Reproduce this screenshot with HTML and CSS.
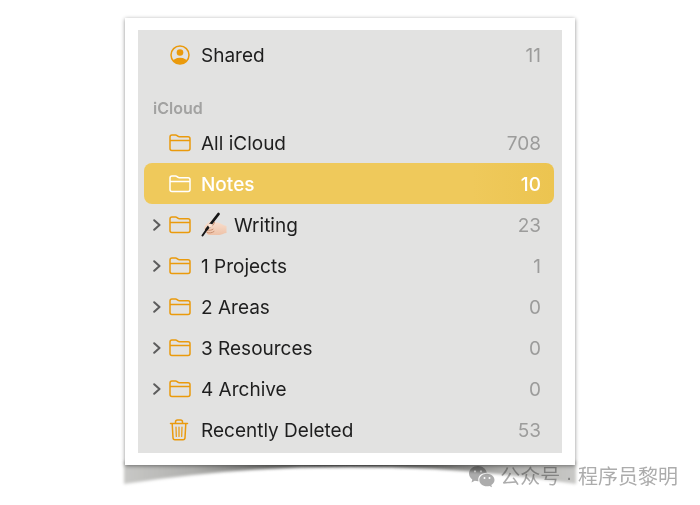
FILE: index.html
```html
<!DOCTYPE html>
<html lang="en">
  <head>
    <meta charset="utf-8">
    <title>Notes folders</title>
    <link rel="stylesheet" href="styles.css">
  </head>
  <body>
    <svg class="symbols" aria-hidden="true">
      <symbol id="folder" viewBox="0 0 22 18">
        <path d="M1 14.500V3a2 2 0 0 1 2-2h3.600c.7 0 1 .2 1.500.6l.7.6c.5.4.8.6 1.500.6H19a2 2 0 0 1 2 2v9.700a2 2 0 0 1-2 2H3a2 2 0 0 1-2-2zM1 6.500h20" />
      </symbol>
      <symbol id="chevron" viewBox="0 0 8 12">
        <path d="M1.200 1.200L6.500 6l-5.300 4.800" />
      </symbol>
    </svg>

    <main class="card">
      <svg class="curl" viewBox="0 0 470 40" preserveAspectRatio="none" aria-hidden="true">
        <defs>
          <linearGradient id="curl-fill">
            <stop offset="0" stop-color="#c8c8c6" />
            <stop offset="0.15" stop-color="#b0b0ae" />
            <stop offset="0.35" stop-color="#6a6a68" />
            <stop offset="0.5" stop-color="#303030" />
            <stop offset="0.65" stop-color="#6a6a68" />
            <stop offset="0.85" stop-color="#b0b0ae" />
            <stop offset="1" stop-color="#c8c8c6" />
          </linearGradient>
          <filter id="soft" x="-5%" y="-30%" width="110%" height="160%">
            <feGaussianBlur stdDeviation="1.600" />
          </filter>
        </defs>
        <path d="M9 4H461V27Q235 -8 9 27z" fill="url(#curl-fill)" filter="url(#soft)" />
      </svg>

      <nav class="sidebar">
        <ul class="list">
          <li>
            <a class="row" href="#shared">
              <span class="arrow"></span>
              <svg class="icon icon-person" viewBox="0 0 20 20" aria-hidden="true">
                <clipPath id="disc"><circle cx="10" cy="10" r="9" /></clipPath>
                <circle cx="10" cy="10" r="9" fill="none" stroke="currentColor" stroke-width="1.500" />
                <circle cx="10" cy="7.500" r="3.300" fill="currentColor" />
                <ellipse cx="10" cy="17.500" rx="7.500" ry="4.700" fill="currentColor" clip-path="url(#disc)" />
              </svg>
              <span class="name">Shared</span>
              <span class="count">11</span>
            </a>
          </li>
        </ul>

        <h2 class="heading">iCloud</h2>
        <ul class="list">
          <li>
            <a class="row" href="#all">
              <span class="arrow"></span>
              <svg class="icon"><use href="#folder" /></svg>
              <span class="name">All iCloud</span>
              <span class="count">708</span>
            </a>
          </li>
          <li>
            <a class="row selected" href="#notes" aria-current="page">
              <span class="arrow"></span>
              <svg class="icon"><use href="#folder" /></svg>
              <span class="name">Notes</span>
              <span class="count">10</span>
            </a>
          </li>
          <li>
            <a class="row" href="#writing">
              <svg class="arrow"><use href="#chevron" /></svg>
              <svg class="icon"><use href="#folder" /></svg>
              <svg class="hand" viewBox="0 0 26 26" role="img" aria-label="Writing hand">
                <defs>
                  <linearGradient id="skin" x1="0" y1="0" x2="0" y2="1">
                    <stop offset="0" stop-color="#fae3d3" />
                    <stop offset="1" stop-color="#eec2a8" />
                  </linearGradient>
                </defs>
                <path d="M3.500 15c1-2.500 4-5 6.500-6.500 1.500-1 3.500-1.500 4.300-.7.7.8 0 1.900-.7 2.700l3.200.1c3.500.5 5 2.700 8.700 3.500v7c-3 0-4 1.900-7 1.900H9c-2.500 0-3.500-1-3.200-2.200-1.800-.8-3-3.300-2.300-5.800z" fill="url(#skin)" />
                <path d="M6 20.500c2.500.8 5 .5 7-1M6.500 18c2 .7 4 .3 5.500-.8M13.500 10.500c-1 2.500-2.500 4-4.500 5" fill="none" stroke="#c98f70" stroke-width="1" stroke-linecap="round" />
                <path d="M17.500 2L5.500 17.500" fill="none" stroke="#161616" stroke-width="2.800" stroke-linecap="round" />
                <path d="M5 18.500L1.500 23.500" fill="none" stroke="#161616" stroke-width="2" stroke-linecap="round" />
                <path d="M6.500 12.500c1.500-1 4-1 4.800.2.500 1.200-.5 2.500-3 3" fill="#fae3d3" />
              </svg>
              <span class="name">Writing</span>
              <span class="count">23</span>
            </a>
          </li>
          <li>
            <a class="row" href="#projects">
              <svg class="arrow"><use href="#chevron" /></svg>
              <svg class="icon"><use href="#folder" /></svg>
              <span class="name">1 Projects</span>
              <span class="count">1</span>
            </a>
          </li>
          <li>
            <a class="row" href="#areas">
              <svg class="arrow"><use href="#chevron" /></svg>
              <svg class="icon"><use href="#folder" /></svg>
              <span class="name">2 Areas</span>
              <span class="count">0</span>
            </a>
          </li>
          <li>
            <a class="row" href="#resources">
              <svg class="arrow"><use href="#chevron" /></svg>
              <svg class="icon"><use href="#folder" /></svg>
              <span class="name">3 Resources</span>
              <span class="count">0</span>
            </a>
          </li>
          <li>
            <a class="row" href="#archive">
              <svg class="arrow"><use href="#chevron" /></svg>
              <svg class="icon"><use href="#folder" /></svg>
              <span class="name">4 Archive</span>
              <span class="count">0</span>
            </a>
          </li>
          <li>
            <a class="row" href="#deleted">
              <span class="arrow"></span>
              <svg class="icon icon-trash" viewBox="0 0 22 22" aria-hidden="true">
                <path d="M1.500 4.500h17M6.500 4.500V3a2 2 0 0 1 2-2h3a2 2 0 0 1 2 2v1.500M3.200 4.500l.8 14.300a2 2 0 0 0 2 1.900h8a2 2 0 0 0 2-1.900l.8-14.300" />
                <path d="M7 8l.3 9.500M10 8v9.500M13 8l-.3 9.500" stroke-width="1.200" />
              </svg>
              <span class="name">Recently Deleted</span>
              <span class="count">53</span>
            </a>
          </li>
        </ul>
      </nav>
    </main>

    <div class="watermark">
      <svg class="wechat" viewBox="0 0 26 22" aria-hidden="true">
        <path d="M9 0C4 0 0 3.400 0 7.600c0 2.400 1.300 4.500 3.300 5.900l-.8 2.900 3.200-1.700c1 .3 2.200.5 3.300.5h.5C8.300 10.600 12.200 6.500 17.800 6.700 17 2.800 13.300 0 9 0z" />
        <path d="M25.500 14c0-3.500-3.500-6.300-7.600-6.300s-7.600 2.800-7.600 6.300 3.400 6.300 7.600 6.300c.9 0 1.800-.1 2.600-.4l2.500 1.400-.7-2.300c2-1.200 3.200-3 3.200-5z" />
        <g fill="#ffffff">
          <circle cx="6" cy="5.300" r="1.100" />
          <circle cx="12" cy="5.300" r="1.100" />
          <circle cx="15.500" cy="12" r="1" />
          <circle cx="20.500" cy="12" r="1" />
        </g>
      </svg>
      <span lang="zh">公众号 · 程序员黎明</span>
    </div>
  </body>
</html>
```
FILE: styles.css
```css
body {
  margin: 0;
  padding: 18px 20px 40px;
  background-color: #ffffff;
  font-family: Inter, "Noto Sans CJK SC", sans-serif;
  font-size: 19px;
  color: #1e1e1e;
}

.symbols {
  position: absolute;
  width: 0;
  height: 0;
}

.card {
  position: relative;
  box-sizing: border-box;
  max-width: 450px;
  margin: 0 auto;
  padding: 12px 13px;
  background-color: #ffffff;
  box-shadow: 0 1px 4px rgba(0, 0, 0, 0.45);
}

/* shadow of the lifted paper corners */
.curl {
  position: absolute;
  z-index: -1;
  top: 100%;
  left: -10px;
  width: calc(100% + 20px);
  height: 40px;
  margin-top: -8px;
}

.sidebar {
  padding: 4px 8px 3px 6px;
  background-color: #e2e2e1;
}

.list {
  margin: 0;
  padding: 0;
  list-style: none;
}

.heading {
  margin: 0;
  padding: 20px 9px 0;
  font-size: 16px;
  font-weight: 600;
  line-height: 27px;
  color: #a2a2a1;
}

.row {
  display: flex;
  align-items: center;
  height: 41px;
  padding: 0 13px 0 9px;
  border-radius: 8px;
  color: inherit;
  text-decoration: none;
}

.arrow {
  width: 8px;
  height: 12px;
  margin-right: 8px;
  fill: none;
  stroke: #5c5c5c;
  stroke-width: 2;
  stroke-linecap: round;
  stroke-linejoin: round;
}

.icon {
  width: 22px;
  height: 18px;
  margin-right: 10px;
  fill: none;
  stroke: #ea9a0c;
  stroke-width: 1.5;
  stroke-linecap: round;
  stroke-linejoin: round;
}

.icon-person {
  height: 20px;
  color: #ea9a0c;
  stroke: none;
}

.icon-trash {
  height: 22px;
}

.hand {
  width: 26px;
  height: 26px;
  margin-right: 7px;
}

.name,
.count {
  padding-top: 1px;
}

.name {
  flex: 1;
}

.count {
  color: #9c9c9b;
}

.selected {
  background: linear-gradient(to right, #efc95b 80%, #ecc450);
  color: #ffffff;
  font-weight: 500;
}

.selected .icon {
  stroke: #ffffff;
}

.selected .count {
  color: #ffffff;
}

.watermark {
  position: absolute;
  right: 22px;
  bottom: 14px;
  display: flex;
  align-items: center;
  gap: 5px;
  font-family: "Liberation Sans", "Noto Sans CJK SC", sans-serif;
  font-size: 20px;
  line-height: 28px;
  color: #acacac;
  mix-blend-mode: multiply;
}

.wechat {
  width: 26px;
  height: 22px;
  fill: #acacac;
}
```
